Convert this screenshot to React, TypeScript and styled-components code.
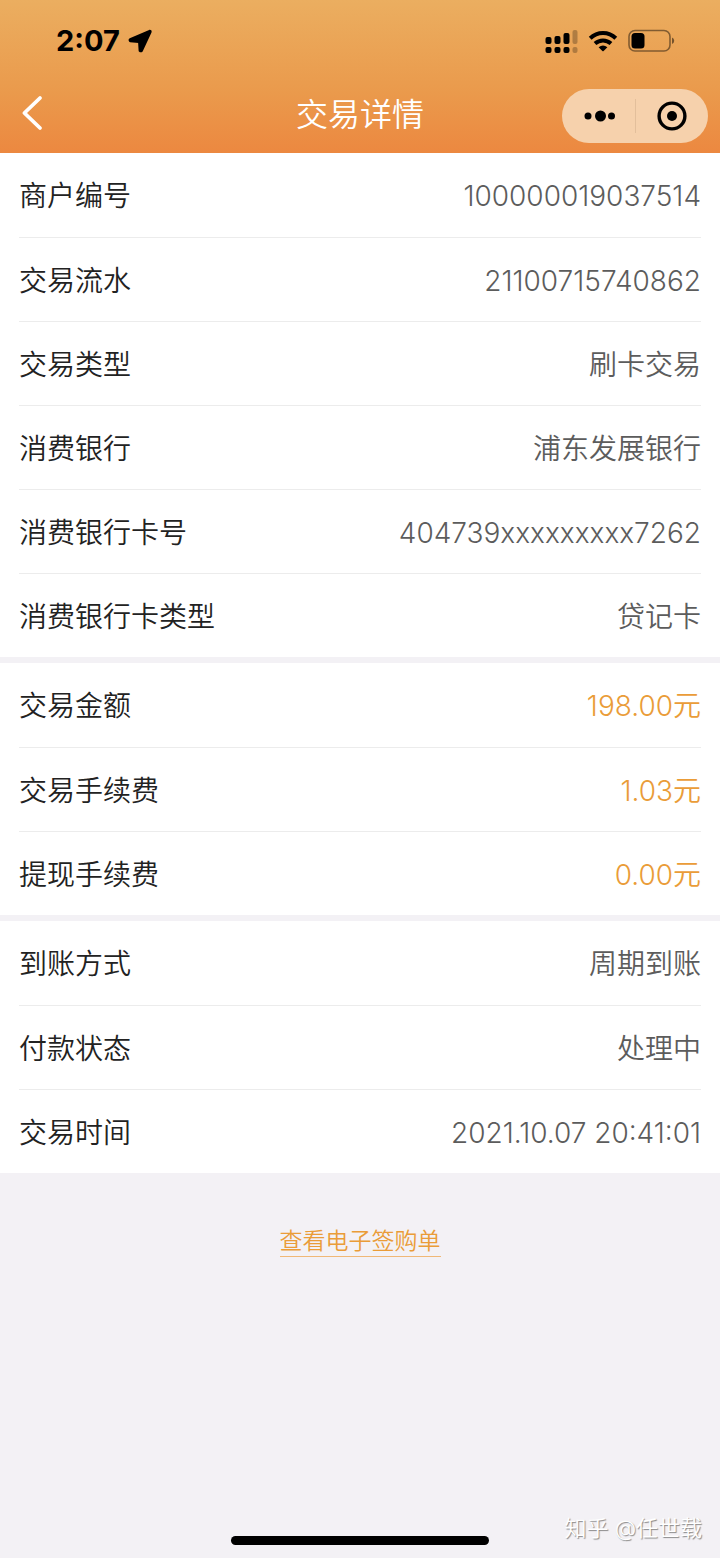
import React from "react";
import styled, { createGlobalStyle } from "styled-components";

const GlobalStyle = createGlobalStyle`
  * { box-sizing: border-box; }
  body {
    margin: 0;
    background: #f3f1f5;
    font-family: Inter, "Noto Sans CJK SC", sans-serif;
    font-weight: 350;
  }
`;

const Page = styled.div`
  position: relative;
  display: flex;
  flex-direction: column;
  min-height: 100vh;
`;

const Header = styled.header`
  background: linear-gradient(#ebae60, #ea9a4c 60%, #ec8840);
`;

const StatusBar = styled.div`
  display: flex;
  justify-content: space-between;
  align-items: center;
  height: 82px;
  padding: 0 44px 0 56px;
`;

const StatusGroup = styled.div<{ $gap: number }>`
  display: flex;
  align-items: center;
  gap: ${(p) => p.$gap}px;
`;

const Clock = styled.time`
  font-size: 29px;
  line-height: 32px;
  font-weight: 700;
  color: #000;
`;

const NavBar = styled.div`
  display: grid;
  grid-template-columns: 1fr auto 1fr;
  align-items: center;
  height: 71px;
  padding: 0 12px 10px;
`;

const Title = styled.h1`
  margin: 0;
  padding-top: 4px;
  font-size: 32px;
  line-height: 48px;
  font-weight: 350;
  color: #fff;
`;

const IconButton = styled.button`
  display: flex;
  align-items: center;
  justify-content: center;
  padding: 0;
  border: 0;
  background: none;
`;

const BackButton = styled(IconButton)`
  justify-self: start;
  width: 40px;
  height: 48px;
`;

const Capsule = styled.div`
  justify-self: end;
  display: flex;
  align-items: center;
  width: 146px;
  height: 54px;
  margin-top: 6px;
  border-radius: 27px;
  background: #f6d1ac;
`;

const CapsuleButton = styled(IconButton)`
  flex: 1;
  height: 54px;
`;

const CapsuleDivider = styled.span`
  width: 1px;
  height: 34px;
  background: #e3bf9b;
`;

const Sections = styled.main`
  display: flex;
  flex-direction: column;
  gap: 6px;
`;

const Section = styled.dl`
  margin: 0;
  padding: 0 19px;
  background: #fff;
`;

const Row = styled.div`
  display: flex;
  align-items: center;
  justify-content: space-between;
  height: 84px;
  padding-top: 2px;
  & + & {
    border-top: 1px solid #ececec;
  }
`;

const Label = styled.dt`
  font-size: 28px;
  line-height: 40px;
  color: #222;
`;

const Value = styled.dd<{ $accent?: boolean }>`
  margin: 0;
  font-size: 28px;
  line-height: 40px;
  color: ${(p) => (p.$accent ? "#ea9c38" : "#5c5c5c")};
`;

const ReceiptLink = styled.a`
  align-self: center;
  margin-top: 53px;
  border-bottom: 1px solid #f0b877;
  font-size: 23px;
  line-height: 30px;
  text-decoration: none;
  color: #ea9c38;
`;

const Footer = styled.footer`
  display: flex;
  justify-content: center;
  margin-top: auto;
  padding: 40px 0 13px;
`;

const HomeIndicator = styled.div`
  width: 258px;
  height: 9px;
  border-radius: 5px;
  background: #000;
`;

const Watermark = styled.span`
  position: absolute;
  right: 18px;
  bottom: 12px;
  font-size: 22px;
  line-height: 36px;
  color: #fff;
  text-shadow: 1px 1px 1px #888;
`;

type Item = { label: string; value: string; accent?: boolean };

const groups: Item[][] = [
  [
    { label: "商户编号", value: "100000019037514" },
    { label: "交易流水", value: "21100715740862" },
    { label: "交易类型", value: "刷卡交易" },
    { label: "消费银行", value: "浦东发展银行" },
    { label: "消费银行卡号", value: "404739xxxxxxxxx7262" },
    { label: "消费银行卡类型", value: "贷记卡" },
  ],
  [
    { label: "交易金额", value: "198.00元", accent: true },
    { label: "交易手续费", value: "1.03元", accent: true },
    { label: "提现手续费", value: "0.00元", accent: true },
  ],
  [
    { label: "到账方式", value: "周期到账" },
    { label: "付款状态", value: "处理中" },
    { label: "交易时间", value: "2021.10.07 20:41:01" },
  ],
];

const LocationIcon = () => (
  <svg width="24" height="24" viewBox="0 0 24 24" aria-hidden="true">
    <path
      d="M21.6 2 2.2 10.3Q1.4 11 2.2 12L10.8 12.8Q11.3 12.8 11.3 13.4L11.8 21.6Q12.8 22.6 13.8 21.6L22.4 2.9Q22.6 1.8 21.6 2Z"
      stroke="#000"
      strokeWidth="2.4"
      strokeLinejoin="round"
    />
  </svg>
);

const SignalIcon = () => (
  <svg width="33" height="24" viewBox="0 0 33 24" aria-hidden="true">
    <rect x="0.5" y="8" width="6" height="7" rx="2" />
    <rect x="9.5" y="7" width="6" height="8" rx="2" />
    <rect x="18.5" y="4" width="6" height="11" rx="2" />
    <rect x="27.5" y="1" width="5" height="14" rx="2" opacity="0.25" />
    <rect x="0.5" y="18" width="6" height="6" rx="2" />
    <rect x="9.5" y="18" width="6" height="6" rx="2" />
    <rect x="18.5" y="18" width="6" height="6" rx="2" />
    <rect x="27.5" y="18" width="5" height="6" rx="2" opacity="0.25" />
  </svg>
);

const WifiIcon = () => (
  <svg width="30" height="24" viewBox="0 0 30 24" aria-hidden="true">
    <path d="M2.2 9.2C9.4 2.2 20.6 2.2 27.8 9.2" fill="none" stroke="#000" strokeWidth="4" />
    <path d="M7 14.6C11.7 10.4 18.3 10.4 23 14.6" fill="none" stroke="#000" strokeWidth="4" />
    <path d="M10.6 18.3Q15 14.9 19.4 18.3L15.6 22.1Q15 22.6 14.4 22.1Z" />
  </svg>
);

const BatteryIcon = () => (
  <svg width="48" height="24" viewBox="0 0 48 24" aria-hidden="true">
    <rect x="1" y="1.5" width="41" height="20.5" rx="6" fill="none" stroke="#000" strokeOpacity="0.45" strokeWidth="1.6" />
    <rect x="3.5" y="4" width="13" height="15.5" rx="3.5" />
    <path d="M44 8.5q2.2 1 2.2 3.3T44 15z" opacity="0.5" />
  </svg>
);

const BackIcon = () => (
  <svg width="22" height="36" viewBox="0 0 22 36" aria-hidden="true">
    <path
      d="M19 3 3.4 18 19 33"
      fill="none"
      stroke="#fff"
      strokeWidth="3.8"
      strokeLinecap="round"
      strokeLinejoin="round"
    />
  </svg>
);

const MoreIcon = () => (
  <svg width="34" height="14" viewBox="0 0 34 14" aria-hidden="true">
    <circle cx="7" cy="7" r="3.5" />
    <circle cx="19.5" cy="7" r="5.5" />
    <circle cx="30.5" cy="7" r="3.5" />
  </svg>
);

const TargetIcon = () => (
  <svg width="30" height="30" viewBox="0 0 30 30" aria-hidden="true">
    <circle cx="15" cy="15" r="12.9" fill="none" stroke="#000" strokeWidth="3.4" />
    <circle cx="15" cy="15" r="5" />
  </svg>
);

export default function App() {
  return (
    <Page>
      <GlobalStyle />
      <Header>
        <StatusBar>
          <StatusGroup $gap={8}>
            <Clock>2:07</Clock>
            <LocationIcon />
          </StatusGroup>
          <StatusGroup $gap={10}>
            <SignalIcon />
            <WifiIcon />
            <BatteryIcon />
          </StatusGroup>
        </StatusBar>
        <NavBar>
          <BackButton type="button" aria-label="返回">
            <BackIcon />
          </BackButton>
          <Title>交易详情</Title>
          <Capsule>
            <CapsuleButton type="button" aria-label="更多">
              <MoreIcon />
            </CapsuleButton>
            <CapsuleDivider />
            <CapsuleButton type="button" aria-label="关闭">
              <TargetIcon />
            </CapsuleButton>
          </Capsule>
        </NavBar>
      </Header>
      <Sections>
        {groups.map((items, i) => (
          <Section key={i}>
            {items.map((item) => (
              <Row key={item.label}>
                <Label>{item.label}</Label>
                <Value $accent={item.accent}>{item.value}</Value>
              </Row>
            ))}
          </Section>
        ))}
      </Sections>
      <ReceiptLink href="#receipt">查看电子签购单</ReceiptLink>
      <Footer>
        <HomeIndicator />
      </Footer>
      <Watermark>知乎 @任世载</Watermark>
    </Page>
  );
}
